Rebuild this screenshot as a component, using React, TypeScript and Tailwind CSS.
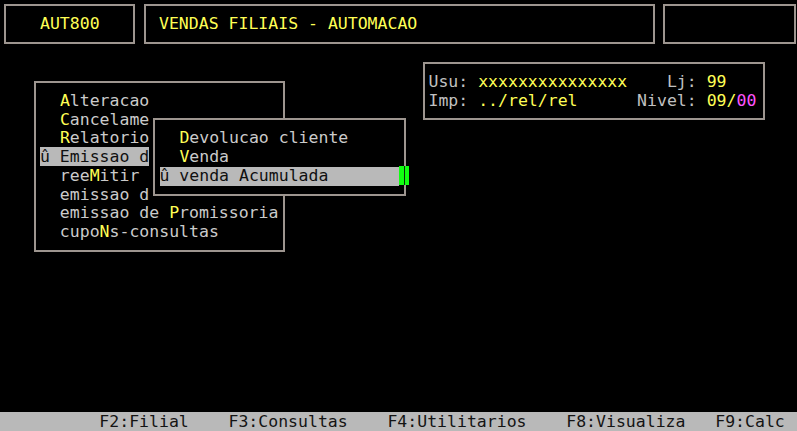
import type { ReactNode } from 'react';

const Box = ({ className, children }: { className: string; children?: ReactNode }) => (
  <div className={`border-2 border-[#9d958f] bg-black ${className}`}>{children}</div>
);

const Hot = ({ pre, hot, rest }: { pre: string; hot: string; rest: string }) => (
  <div className="h-[18.75px] whitespace-pre text-[#cbcbcb]">
    {pre}
    <span className="text-[#ffff55]">{hot}</span>
    {rest}
  </div>
);

const App = () => {
  const menu = [
    { pre: '  ', hot: 'A', rest: 'lteracao' },
    { pre: '  ', hot: 'C', rest: 'ancelame' },
    { pre: '  ', hot: 'R', rest: 'elatorio' },
  ];

  return (
    <div className="relative flex h-[431px] w-[797px] flex-col overflow-hidden bg-black font-['DejaVu_Sans_Mono',monospace] text-[16.5px] leading-[18.75px]">
      {/* Header boxes */}
      <div className="flex pt-[4px]">
        <Box className="ml-[4px] flex h-[40px] w-[131px] items-center pl-[34px] text-[#ffff55]">AUT800</Box>
        <Box className="ml-[9px] flex h-[40px] w-[511px] items-center pl-[13px] text-[#ffff55]">
          VENDAS FILIAIS - AUTOMACAO
        </Box>
        <Box className="ml-[8px] h-[40px] w-[133px]" />
      </div>

      {/* Main area */}
      <div className="flex items-start">
        <Box className="ml-[34px] mt-[37px] h-[171px] w-[251px] pl-[4px] pt-[8.75px]">
          {menu.map((m) => (
            <Hot key={m.rest} {...m} />
          ))}
          <div className="h-[18.75px]">
            <span className="whitespace-pre bg-[#b9b9b9] text-[#101010]">û Emissao d</span>
          </div>
          <Hot pre="  ree" hot="M" rest="itir" />
          <div className="h-[18.75px] whitespace-pre text-[#cbcbcb]">  emissao d</div>
          <Hot pre="  emissao de " hot="P" rest="romissoria" />
          <Hot pre="  cupo" hot="N" rest="s-consultas" />
        </Box>

        <Box className="ml-[138px] mt-[18px] h-[58px] w-[342px] pl-[3.5px] pt-[9px]">
          <div className="h-[18.75px] whitespace-pre text-[#c0c0c0]">
            Usu: <span className="text-[#ffff55]">xxxxxxxxxxxxxxx</span>    Lj: <span className="text-[#ffff55]">99</span>
          </div>
          <div className="h-[18.75px] whitespace-pre text-[#c0c0c0]">
            Imp: <span className="text-[#ffff55]">../rel/rel</span>      Nivel: <span className="text-[#ffff55]">09/</span>
            <span className="text-[#ff55ff]">00</span>
          </div>
        </Box>
      </div>

      {/* Submenu overlay */}
      <Box className="absolute left-[153px] top-[118px] h-[78px] w-[253px] pl-[4.5px] pt-[9.25px]">
        <Hot pre="  " hot="D" rest="evolucao cliente" />
        <Hot pre="  " hot="V" rest="enda" />
        <div className="h-[18.75px] w-[239px] whitespace-pre bg-[#b9b9b9] text-[#101010]">û venda Acumulada</div>
      </Box>
      <div className="absolute left-[399px] top-[166px] h-[18.75px] w-[10px] bg-[#11ff11]">
        <div className="absolute left-[4.5px] top-0 h-full w-[1.5px] bg-[#0a2a0a]" />
      </div>

      {/* Function key bar */}
      <div className="mt-auto h-[19px] whitespace-pre bg-[#b9b9b9] leading-[19px] text-[#141414]">
        {'          F2:Filial    F3:Consultas    F4:Utilitarios    F8:Visualiza   F9:Calc'}
      </div>
    </div>
  );
};

export default App;
